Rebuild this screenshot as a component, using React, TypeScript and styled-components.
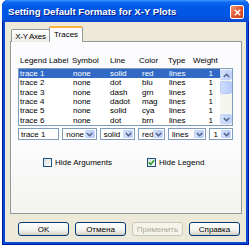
import React, { FC } from 'react';
import styled, { createGlobalStyle, css } from 'styled-components';

const GlobalStyle = createGlobalStyle`
  html, body {
    margin: 0;
    padding: 0;
    background: #ffffff;
  }
  body {
    font-family: 'Liberation Sans', Arial, sans-serif;
  }
`;

type Trace = {
  label: string;
  symbol: string;
  line: string;
  color: string;
  type: string;
  weight: string;
};

const traces: Trace[] = [
  { label: 'trace 1', symbol: 'none', line: 'solid', color: 'red', type: 'lines', weight: '1' },
  { label: 'trace 2', symbol: 'none', line: 'dot', color: 'blu', type: 'lines', weight: '1' },
  { label: 'trace 3', symbol: 'none', line: 'dash', color: 'grn', type: 'lines', weight: '1' },
  { label: 'trace 4', symbol: 'none', line: 'dadot', color: 'mag', type: 'lines', weight: '1' },
  { label: 'trace 5', symbol: 'none', line: 'solid', color: 'cya', type: 'lines', weight: '1' },
  { label: 'trace 6', symbol: 'none', line: 'dot', color: 'brn', type: 'lines', weight: '1' },
];

const Chevron: FC<{ up?: boolean }> = ({ up }) => (
  <svg width="7" height="5" viewBox="0 0 7 5">
    <path
      d={up ? 'M0.8 4 L3.5 1.3 L6.2 4' : 'M0.8 1 L3.5 3.7 L6.2 1'}
      fill="none"
      stroke="#4d6185"
      strokeWidth="1.5"
    />
  </svg>
);

const CloseIcon: FC = () => (
  <svg width="7" height="7" viewBox="0 0 7 7">
    <path d="M0.8 0.8 L6.2 6.2 M6.2 0.8 L0.8 6.2" stroke="#fff" strokeWidth="1.6" />
  </svg>
);

const CheckMark: FC = () => (
  <svg width="7" height="7" viewBox="0 0 7 7">
    <path d="M0.8 3.4 L2.8 5.4 L6.2 1.2" fill="none" stroke="#21a121" strokeWidth="1.5" />
  </svg>
);

const Combo: FC<{ value: string; width: number }> = ({ value, width }) => (
  <ComboBox $width={width}>
    <ComboValue>{value}</ComboValue>
    <ComboArrow>
      <Chevron />
    </ComboArrow>
  </ComboBox>
);

const App: FC = () => {
  return (
    <>
      <GlobalStyle />
      <Page>
        <Window>
          <TitleBar>
            <Title>Setting Default Formats for X-Y Plots</Title>
            <CloseButton>
              <CloseIcon />
            </CloseButton>
          </TitleBar>
          <Body>
            <TabStrip>
              <Tab>X-Y Axes</Tab>
              <Tab $active>Traces</Tab>
            </TabStrip>
            <Panel>
              <HeaderRow>
                <span>Legend Label</span>
                <span>Symbol</span>
                <span>Line</span>
                <span>Color</span>
                <span>Type</span>
                <span>Weight</span>
              </HeaderRow>
              <ListBox>
                <Rows>
                  {traces.map((t, i) => (
                    <Row key={t.label} $selected={i === 0}>
                      <span>{t.label}</span>
                      <span>{t.symbol}</span>
                      <span>{t.line}</span>
                      <span>{t.color}</span>
                      <span>{t.type}</span>
                      <WeightCell>{t.weight}</WeightCell>
                    </Row>
                  ))}
                </Rows>
                <ScrollBar>
                  <ScrollButton>
                    <Chevron up />
                  </ScrollButton>
                  <Thumb />
                  <Track />
                  <ScrollButton>
                    <Chevron />
                  </ScrollButton>
                </ScrollBar>
              </ListBox>
              <EditRow>
                <TextBox>trace 1</TextBox>
                <Combo value="none" width={35} />
                <Combo value="solid" width={36} />
                <Combo value="red" width={27} />
                <Combo value="lines" width={39} />
                <Combo value="1" width={24} />
              </EditRow>
              <CheckRow>
                <CheckItem>
                  <CheckBox />
                  Hide Arguments
                </CheckItem>
                <CheckItem>
                  <CheckBox>
                    <CheckMark />
                  </CheckBox>
                  Hide Legend
                </CheckItem>
              </CheckRow>
            </Panel>
            <ButtonRow>
              <Button>OK</Button>
              <Button>Отмена</Button>
              <Button disabled>Применить</Button>
              <Button>Справка</Button>
            </ButtonRow>
          </Body>
        </Window>
      </Page>
    </>
  );
};

export default App;

const Page = styled.div`
  width: 252px;
  height: 252px;
  padding-left: 2px;
  box-sizing: border-box;
`;

const Window = styled.div`
  width: 247px;
  height: 245px;
  display: flex;
  flex-direction: column;
  box-sizing: border-box;
  background: #0a48d6;
  border-radius: 6px 6px 0 0;
  padding: 0 3px 3px 3px;
  box-shadow: inset 1px 0 0 #001c9c, inset -1px 0 0 #001c9c, inset 0 -1px 0 #001c9c;
`;

const TitleBar = styled.div`
  height: 22px;
  margin: 0 -3px;
  padding: 0 5px 0 6px;
  display: flex;
  align-items: center;
  justify-content: space-between;
  border-radius: 6px 6px 0 0;
  background: linear-gradient(
    #3d95ff 0%,
    #0a66f0 12%,
    #0058e6 35%,
    #0055e5 70%,
    #0a4fd8 90%,
    #0843c8 100%
  );
`;

const Title = styled.div`
  color: #fff;
  font-weight: 700;
  font-size: 9.6px;
  text-shadow: 1px 1px 0 #0a1e8a;
  white-space: nowrap;
`;

const CloseButton = styled.div`
  width: 12px;
  height: 12px;
  margin-top: 2px;
  border: 1px solid #fff;
  border-radius: 2px;
  background: linear-gradient(135deg, #f09a78, #e0512a 55%, #c7401c);
  display: flex;
  align-items: center;
  justify-content: center;
`;

const Body = styled.div`
  flex: 1;
  background: #ece9d8;
  display: flex;
  flex-direction: column;
  padding: 5px 4px 0 5px;
`;

const TabStrip = styled.div`
  display: flex;
  align-items: flex-end;
  height: 15px;
  padding-left: 1px;
  position: relative;
  z-index: 1;
  margin-bottom: -1px;
`;

const Tab = styled.div<{ $active?: boolean }>`
  font-size: 8px;
  color: #000;
  white-space: nowrap;
  border: 1px solid #919b9c;
  border-bottom: none;
  border-radius: 2px 2px 0 0;
  box-sizing: border-box;
  display: flex;
  align-items: center;
  justify-content: center;
  ${({ $active }) =>
    $active
      ? css`
          height: 16px;
          width: 34px;
          background: #fcfcfe;
          border-top: 2px solid #f8b33d;
          padding-bottom: 2px;
          margin-left: -1px;
        `
      : css`
          height: 13px;
          width: 39px;
          background: linear-gradient(#fff, #ecebe5);
          letter-spacing: -0.3px;
        `}
`;

const Panel = styled.div`
  height: 173px;
  box-sizing: border-box;
  border: 1px solid #919b9c;
  background: linear-gradient(#fcfcfe 60%, #f4f3ee);
  padding: 13px 8px 0 7px;
  display: flex;
  flex-direction: column;
`;

const cell = css`
  display: grid;
  align-items: center;
  font-size: 8px;
  white-space: nowrap;
`;

const HeaderRow = styled.div`
  ${cell};
  grid-template-columns: 52px 38px 29px 29px 25px 25px;
  padding-left: 2px;
  height: 10px;
  margin-bottom: 3px;
  color: #000;
`;

const ListBox = styled.div`
  height: 58px;
  box-sizing: border-box;
  border: 1px solid #7f9db9;
  background: #fff;
  display: flex;
`;

const Rows = styled.div`
  flex: 1;
  display: flex;
  flex-direction: column;
`;

const Row = styled.div<{ $selected?: boolean }>`
  ${cell};
  grid-template-columns: 53px 37px 32px 27px 24px 20px;
  padding-left: 1px;
  height: 9.3px;
  line-height: 9px;
  color: ${({ $selected }) => ($selected ? '#fff' : '#000')};
  background: ${({ $selected }) => ($selected ? '#316ac5' : 'transparent')};
`;

const WeightCell = styled.span`
  text-align: right;
`;

const ScrollBar = styled.div`
  width: 12px;
  display: flex;
  flex-direction: column;
  background: #f5f5f0;
  padding: 1px 0;
  box-sizing: border-box;
`;

const ScrollButton = styled.div`
  height: 10px;
  border: 1px solid #c3d3fd;
  border-radius: 2px;
  box-sizing: border-box;
  background: linear-gradient(90deg, #d4e2fc, #bccefa);
  display: flex;
  align-items: center;
  justify-content: center;
`;

const Thumb = styled.div`
  height: 13px;
  margin-top: 1px;
  border: 1px solid #b6cbf9;
  border-radius: 2px;
  box-sizing: border-box;
  background: linear-gradient(90deg, #cddcfc, #b7cbf8);
`;

const Track = styled.div`
  flex: 1;
`;

const EditRow = styled.div`
  display: flex;
  gap: 2px;
  margin-top: 2px;
  height: 12px;
`;

const TextBox = styled.div`
  width: 42px;
  box-sizing: border-box;
  border: 1px solid #7f9db9;
  background: #fff;
  font-size: 8px;
  padding-left: 2px;
  display: flex;
  align-items: center;
`;

const ComboBox = styled.div<{ $width: number }>`
  width: ${({ $width }) => $width}px;
  box-sizing: border-box;
  border: 1px solid #7f9db9;
  background: #fff;
  display: flex;
  align-items: stretch;
  padding: 1px;
  margin-left: 1px;
`;

const ComboValue = styled.div`
  flex: 1;
  font-size: 8px;
  padding-left: 2px;
  display: flex;
  align-items: center;
  white-space: nowrap;
  overflow: hidden;
`;

const ComboArrow = styled.div`
  width: 10px;
  border-radius: 1px;
  background: linear-gradient(90deg, #d4e2fc, #b5c8f7);
  border: 1px solid #c3d3fd;
  box-sizing: border-box;
  display: flex;
  align-items: center;
  justify-content: center;
`;

const CheckRow = styled.div`
  display: grid;
  grid-template-columns: 104px auto;
  margin-top: 18px;
  padding-left: 25px;
`;

const CheckItem = styled.div`
  display: flex;
  align-items: center;
  gap: 3px;
  font-size: 8px;
  color: #000;
  white-space: nowrap;
`;

const CheckBox = styled.div`
  width: 9px;
  height: 9px;
  box-sizing: border-box;
  border: 1px solid #1c5180;
  background: linear-gradient(135deg, #dcdcd7, #fff);
  display: flex;
  align-items: center;
  justify-content: center;
`;

const ButtonRow = styled.div`
  display: flex;
  gap: 6px;
  padding: 8px 0 0 8px;
`;

const Button = styled.button`
  width: 51px;
  height: 14px;
  padding: 0;
  box-sizing: border-box;
  font-family: 'Liberation Sans', Arial, sans-serif;
  font-size: 8px;
  color: #000;
  border: 1px solid #003c74;
  border-radius: 3px;
  background: linear-gradient(#fff, #f3f3ef 60%, #d6d0c5);
  box-shadow: inset 0 -1px 0 #d6d0c5;
  &:disabled {
    color: #aca899;
    border-color: #c9c7ba;
    background: #f5f4ea;
    box-shadow: none;
  }
`;
